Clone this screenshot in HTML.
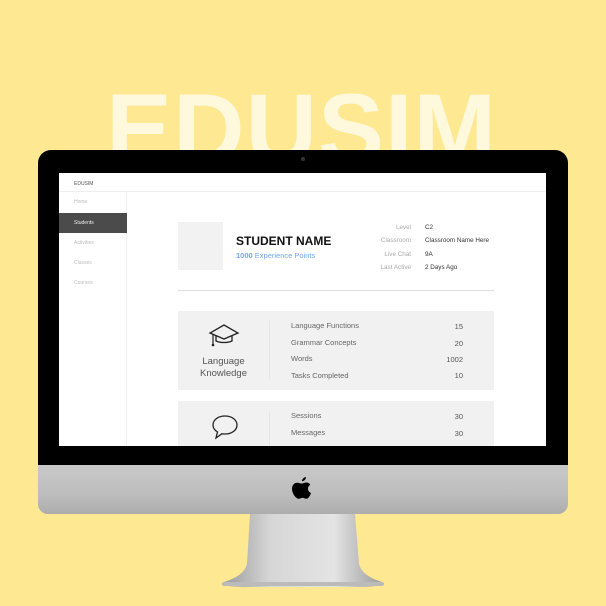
<!DOCTYPE html>
<html><head><style>
*{margin:0;padding:0;box-sizing:border-box}
body{width:606px;height:606px;background:#fee891;position:relative;overflow:hidden;font-family:"Liberation Sans",sans-serif}
.big{position:absolute;left:106px;top:79px;font-size:99px;font-weight:bold;color:#fef8dc;letter-spacing:1px;line-height:1}
.bezel{position:absolute;left:38px;top:150px;width:530px;height:316px;background:#000;border-radius:13px 13px 0 0}
.cam{position:absolute;left:263px;top:7px;width:4px;height:4px;border-radius:50%;background:#333}
.chin{position:absolute;left:38px;top:465px;width:530px;height:49px;background:linear-gradient(#c9c9c9,#bdbdbd 60%,#adadad);border-radius:0 0 10px 10px}
.screen{position:absolute;left:59px;top:173px;width:487px;height:273px;background:#fff;overflow:hidden}
.hdr{height:19px;border-bottom:1px solid #eee;font-size:5px;color:#555;padding:8px 0 0 15px}
.side{position:absolute;left:0;top:19px;width:68px;height:260px;border-right:1px solid #eee}
.side div{position:absolute;left:15px;font-size:5px;color:#bbb}
.act{left:0!important;width:68px;height:20px;background:#4b4b4b;color:#eee!important;padding:7px 0 0 15px}
.t{position:absolute;white-space:nowrap}
.card{position:absolute;left:119px;width:316px;background:#f1f1f1}
.row{position:absolute;font-size:7.5px;color:#666}
.val{position:absolute;font-size:7.5px;color:#555;text-align:right;width:40px}
</style></head><body>
<div class="big">EDUSIM</div>
<div class="bezel"><div class="cam"></div></div>
<div class="chin"></div>
<svg style="position:absolute;left:290px;top:476px" width="24" height="28" viewBox="0 0 24 28"><path d="M16 1c0 2-1.5 4-4 4.3 0-2 1.6-4 4-4.3zM12 7.5c1.2 0 2.6-1 4.2-1 2 0 3.4 1 4.2 2.3-3.6 1.9-3 7 .6 8.2-.8 2.4-2.5 5.8-4.6 5.8-1.5 0-2-.9-3.8-.9s-2.5.9-4 .9C6.300 22.800 2 18 2 12.800 2 9 4.500 6.700 7.200 6.700c1.800 0 3.400 1 4.800.8z" fill="#000"/></svg>
<svg style="position:absolute;left:222px;top:514px" width="162" height="80" viewBox="0 0 162 80"><defs><linearGradient id="g" x1="0" x2="1"><stop offset="0" stop-color="#9a9a9a"/><stop offset=".3" stop-color="#d6d6d6"/><stop offset=".7" stop-color="#e4e4e4"/><stop offset="1" stop-color="#9c9c9c"/></linearGradient></defs><path d="M28 0H133L137 50Q140 62 160 68L160 70Q160 72 140 73H22Q0 72 0 70L2 68Q22 62 25 50Z" fill="url(#g)"/><rect x="0" y="68" width="162" height="4" rx="2" fill="#bbb"/></svg>
<div class="screen">
<div class="hdr">EDUSIM</div>
<div class="side">
<div style="top:7px">Home</div>
<div class="act" style="top:21px">Students</div>
<div style="top:48px">Activities</div>
<div style="top:68px">Classes</div>
<div style="top:88px">Courses</div>
</div>
<div style="position:absolute;left:119px;top:49px;width:45px;height:48px;background:#f2f2f2"></div>
<div class="t" style="left:177px;top:61px;font-size:12px;font-weight:bold;color:#111">STUDENT NAME</div>
<div class="t" style="left:177px;top:78px;font-size:7.5px;color:#6ea8ef"><b>1000</b> Experience Points</div>
<div class="t" style="left:300px;top:48px;width:52px;text-align:right;font-size:6.3px;color:#aaa;line-height:13.3px">Level<br>Classroom<br>Live Chat<br>Last Active</div>
<div class="t" style="left:366px;top:48px;font-size:6.3px;color:#333;line-height:13.3px">C2<br>Classroom Name Here<br>9A<br>2 Days Ago</div>
<div style="position:absolute;left:119px;top:117px;width:316px;height:1px;background:#ddd"></div>
<div class="card" style="top:138px;height:79px">
<div style="position:absolute;left:91px;top:10px;width:1px;height:58px;background:#e6e6e6"></div>
<svg style="position:absolute;left:30px;top:13px" width="32" height="25" viewBox="0 0 32 25"><path d="M16 1L2 9l14 6 14-6z" fill="none" stroke="#222" stroke-width="1.3"/><path d="M8 12v5c4 2 12 2 16 0v-5" fill="none" stroke="#222" stroke-width="1.3"/><path d="M5 10v10" stroke="#222" stroke-width="1.2"/><circle cx="5" cy="21" r="1.3" fill="#222"/></svg>
<div class="t" style="left:0;width:91px;top:45px;text-align:center;font-size:9.5px;color:#555;line-height:12px">Language<br>Knowledge</div>
<div class="row" style="left:113px;top:10px">Language Functions</div>
<div class="row" style="left:113px;top:27px">Grammar Concepts</div>
<div class="row" style="left:113px;top:43px">Words</div>
<div class="row" style="left:113px;top:60px">Tasks Completed</div>
<div class="val" style="left:245px;top:11px">15</div>
<div class="val" style="left:245px;top:28px">20</div>
<div class="val" style="left:245px;top:44px">1002</div>
<div class="val" style="left:245px;top:60px">10</div>
</div>
<div class="card" style="top:228px;height:60px">
<div style="position:absolute;left:91px;top:10px;width:1px;height:50px;background:#e6e6e6"></div>
<svg style="position:absolute;left:33px;top:13px" width="28" height="26" viewBox="0 0 28 26"><path d="M14 2C7 2 2 6 2 11c0 3 2 5.500 4.500 7L5 24l6-4.300c1 .2 2 .3 3 .3 7 0 12-4 12-9S21 2 14 2z" fill="none" stroke="#222" stroke-width="1.3"/></svg>
<div class="row" style="left:113px;top:10px">Sessions</div>
<div class="row" style="left:113px;top:27px">Messages</div>
<div class="val" style="left:245px;top:11px">30</div>
<div class="val" style="left:245px;top:28px">30</div>
</div>
</div>
</body></html>
